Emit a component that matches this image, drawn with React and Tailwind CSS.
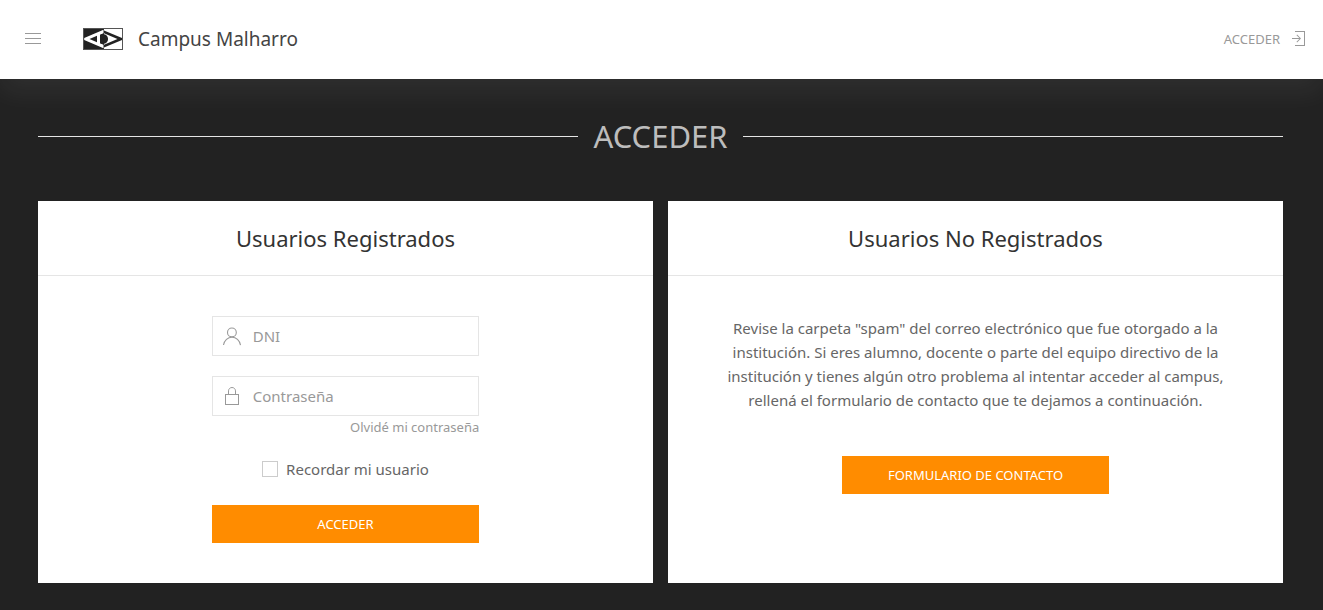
function MenuIcon() {
  return (
    <svg width="20" height="20" viewBox="0 0 20 20" fill="currentColor" aria-hidden="true">
      <rect x="2" y="4" width="16" height="1" />
      <rect x="2" y="9" width="16" height="1" />
      <rect x="2" y="14" width="16" height="1" />
    </svg>
  );
}

function SignInIcon() {
  return (
    <svg width="20" height="20" viewBox="0 0 20 20" fill="currentColor" aria-hidden="true">
      <polygon points="7 2 17 2 17 17 7 17 7 16 16 16 16 3 7 3 7 2" />
      <polygon points="9.1 13.4 8.5 12.8 11.28 10 4 10 4 9 11.28 9 8.5 6.2 9.1 5.62 13 9.5 9.1 13.4" />
    </svg>
  );
}

function UserIcon() {
  return (
    <svg width="20" height="20" viewBox="0 0 20 20" fill="none" stroke="currentColor" strokeWidth="1.1" aria-hidden="true">
      <circle cx="9.9" cy="6.4" r="4.4" />
      <path d="M1.5,19 C2.3,14.5 5.8,11.2 10,11.2 C14.2,11.2 17.7,14.6 18.5,19.2" />
    </svg>
  );
}

function LockIcon() {
  return (
    <svg width="20" height="20" viewBox="0 0 20 20" fill="none" stroke="currentColor" aria-hidden="true">
      <rect x="3.5" y="8.5" width="13" height="10" />
      <path d="M6.5,8 L6.5,4.88 C6.5,3.01 8.07,1.5 10,1.5 C11.93,1.5 13.5,3.01 13.5,4.88 L13.5,8" />
    </svg>
  );
}

function Logo() {
  return (
    <svg width="40" height="22" viewBox="0 0 40 22" aria-hidden="true">
      <rect width="40" height="22" fill="#222" />
      {/* right half */}
      <path d="M21 1H39V10L21 2.5Z" fill="#fff" />
      <path d="M21 21H39V12L21 19.5Z" fill="#fff" />
      <path d="M21 5.2L34.5 11L21 16.8Z" fill="#fff" />
      {/* left half */}
      <path d="M20.5 1.8V5.2L17 6.8V15.2L20.5 16.8V20.2L1.2 12V10Z" fill="#fff" />
      <path d="M14 7.8V14.2L6.5 11Z" fill="#222" />
      {/* pupil */}
      <path d="M17 7L19.5 6C23 6 25 8.2 25 11C25 13.8 23 16 19.5 16L17 15Z" fill="#222" />
      <rect x="0.5" y="0.5" width="39" height="21" fill="none" stroke="#555" />
    </svg>
  );
}

function Field({ id, type, label, icon }) {
  return (
    <div className="relative">
      <label htmlFor={id} className="absolute inset-y-0 left-0 flex w-10 items-center justify-center text-[#999]">
        {icon}
      </label>
      <input
        id={id}
        type={type}
        aria-label={label}
        placeholder={label}
        className="block h-10 w-full border border-[#e5e5e5] bg-white pr-3 pl-10 text-[15px] text-[#666] outline-none placeholder:text-[#999] focus:border-[#ff8c00]"
      />
    </div>
  );
}

function Card({ title, children }) {
  return (
    <section className="bg-white">
      <div className="border-b border-[#e5e5e5] px-10 py-5">
        <h2 className="text-center text-[22px] leading-[34px] text-[#333]">{title}</h2>
      </div>
      <div className="p-10">{children}</div>
    </section>
  );
}

export default function App() {
  return (
    <div className="flex min-h-screen flex-col bg-[#222] font-['Noto_Sans','Open_Sans',sans-serif] text-[15px] leading-6 text-[#666]">
      <header className="relative z-10 flex items-center bg-white px-[15px] pt-[19px] pb-5 shadow-[0_14px_25px_rgba(255,255,255,0.06)]">
        <button type="button" aria-label="Menú" className="mr-10 ml-2 text-[#999]">
          <MenuIcon />
        </button>
        <a href="#" className="flex items-center gap-[15px] text-[19px] leading-10 text-[#444]">
          <Logo />
          Campus Malharro
        </a>
        <a href="#" className="ml-auto flex items-center gap-2 text-[13px] text-[#999]">
          ACCEDER
          <SignInIcon />
        </a>
      </header>

      <main className="grow pt-9 pr-10 pb-7 pl-[38px]">
        <div className="flex items-center gap-[15px]">
          <span className="h-px grow bg-[#e5e5e5]" />
          <h1 className="text-[31px] leading-[42px] text-[#bdbdbd]">ACCEDER</h1>
          <span className="h-px grow bg-[#e5e5e5]" />
        </div>

        <div className="mt-11 grid gap-[15px] md:grid-cols-2">
          <Card title="Usuarios Registrados">
            <form className="mx-auto w-1/2" onSubmit={(e) => e.preventDefault()}>
              <Field id="dni" type="text" label="DNI" icon={<UserIcon />} />
              <div className="mt-5">
                <Field id="password" type="password" label="Contraseña" icon={<LockIcon />} />
              </div>
              <a href="#" className="block text-right text-[13px] leading-[22px] text-[#999]">Olvidé mi contraseña</a>
              <div className="mt-[19px] flex items-center justify-center gap-2">
                <input
                  id="remember"
                  type="checkbox"
                  className="size-4 appearance-none border border-[#ccc] bg-white checked:bg-[#ff8c00]"
                />
                <label htmlFor="remember">Recordar mi usuario</label>
              </div>
              <button type="submit" className="mt-6 block w-full bg-[#ff8c00] text-[13px] leading-[38px] text-white">
                ACCEDER
              </button>
            </form>
          </Card>

          <Card title="Usuarios No Registrados">
            <p className="text-center">
              Revise la carpeta "spam" del correo electrónico que fue otorgado a la institución. Si eres alumno,
              docente o parte del equipo directivo de la institución y tienes algún otro problema al intentar acceder
              al campus, rellená el formulario de contacto que te dejamos a continuación.
            </p>
            <a href="#" className="mx-auto mt-11 block w-1/2 bg-[#ff8c00] text-center text-[13px] leading-[38px] text-white">
              FORMULARIO DE CONTACTO
            </a>
          </Card>
        </div>
      </main>
    </div>
  );
}
